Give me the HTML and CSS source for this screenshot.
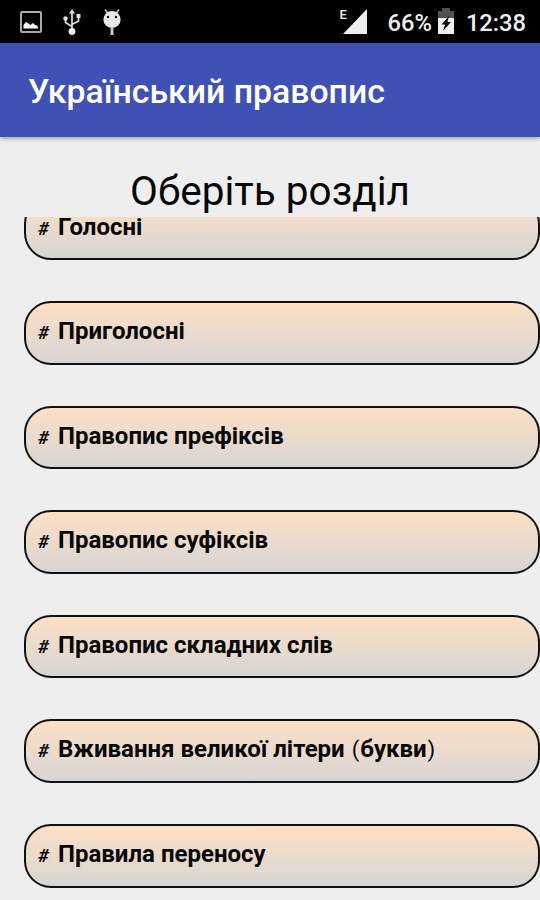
FILE: index.html
```html
<!DOCTYPE html>
<html lang="uk">
<head>
    <meta charset="UTF-8">
    <meta name="viewport" content="width=device-width, initial-scale=1.0">
    <title>Український правопис</title>
    <link rel="stylesheet" href="styles.css">
</head>
<body>

<div class="status-bar">
    <div class="status-left">
        <svg class="icon-image" width="22" height="22" viewBox="0 0 22 22">
            <rect x="1" y="1" width="20" height="20" rx="1" fill="none" stroke="#a8a8a8" stroke-width="2"/>
            <path d="M3.500 17.500V14l2.500-3 2.500 1.500 2 1.500 2.500-2 2 2 2 .5 1.500 3z" fill="#fff"/>
        </svg>
        <svg class="icon-usb" width="18" height="27" viewBox="0 0 18 27">
            <path d="M9 22V3M9 17.500L2.500 13.500V9M9 15.500l6.500-3.500V7" fill="none" stroke="#dedede" stroke-width="1.700"/>
            <path d="M9 0l3 4.500H6z" fill="#dedede"/>
            <circle cx="9" cy="22.500" r="3.400" fill="#f0f0f0"/>
            <circle cx="2.500" cy="9.500" r="2.200" fill="#dedede"/>
            <rect x="13.500" y="5" width="4" height="4" fill="#dedede"/>
        </svg>
        <svg class="icon-debug" width="18" height="27" viewBox="0 0 18 27">
            <path d="M2 .5l3 4M16 .5l-3 4" stroke="#d0d0d0" stroke-width="1.500"/>
            <ellipse cx="9" cy="10.500" rx="8.600" ry="8.500" fill="#e8e8e8"/>
            <path d="M9 18v8" stroke="#c8c8c8" stroke-width="3"/>
            <circle cx="5" cy="8" r="1.200" fill="#111"/>
            <circle cx="13" cy="8" r="1.200" fill="#111"/>
        </svg>
    </div>
    <div class="status-right">
        <span class="network">E</span>
        <svg class="icon-signal" width="24" height="25" viewBox="0 0 24 25">
            <path d="M24 0v25H0z" fill="#eee"/>
        </svg>
        <span class="percent">66%</span>
        <svg class="icon-battery" width="16" height="26" viewBox="0 0 16 26">
            <path d="M0 10V3h4V0h8v3h4v7z" fill="#505050"/>
            <path d="M0 10h16v16H0z" fill="#eee"/>
            <path d="M11 8L3.500 16.500H7L5 23l8-9H9.500z" fill="#111"/>
        </svg>
        <span class="clock">12:38</span>
    </div>
</div>

<header class="app-bar">
    <h1>Український правопис</h1>
</header>

<h2>Оберіть розділ</h2>

<div class="list">
    <div class="item"><span class="hash">#</span>Голосні</div>
    <div class="item"><span class="hash">#</span>Приголосні</div>
    <div class="item"><span class="hash">#</span>Правопис префіксів</div>
    <div class="item"><span class="hash">#</span>Правопис суфіксів</div>
    <div class="item"><span class="hash">#</span>Правопис складних слів</div>
    <div class="item"><span class="hash">#</span>Вживання великої літери <span class="paren">(</span>букви<span class="paren">)</span></div>
    <div class="item"><span class="hash">#</span>Правила переносу</div>
</div>

</body>
</html>
```
FILE: styles.css
```css
body {
    margin: 0;
    height: 900px;
    overflow: hidden;
    display: flex;
    flex-direction: column;
    background-color: #eeeeee;
    color: #080808;
    font-family: Roboto, "Noto Sans", sans-serif;
}
.status-bar {
    height: 43px;
    flex: none;
    display: flex;
    justify-content: space-between;
    background-color: #000;
    color: #eee;
}
.status-left, .status-right {
    display: flex;
    align-items: flex-start;
}
.status-left {
    padding-left: 20px;
}
.icon-image {
    margin-top: 11px;
}
.icon-usb {
    margin: 9px 0 0 21px;
}
.icon-debug {
    margin: 9px 0 0 22px;
}
.status-right {
    padding-right: 14px;
}
.network {
    margin-top: 8px;
    font-size: 13px;
    line-height: 14px;
    font-weight: 500;
    width: 3px;
}
.icon-signal {
    margin-top: 9px;
}
.percent, .clock {
    font-size: 23.7px;
    line-height: 28px;
    margin-top: 9px;
    font-weight: 500;
}
.percent {
    margin-left: 21px;
}
.icon-battery {
    margin: 8px 12px 0 6px;
}
.app-bar {
    height: 94px;
    flex: none;
    display: flex;
    align-items: center;
    padding-left: 28px;
    background-color: #3f51b5;
    box-shadow: 0 1px 5px rgba(0,0,0,0.4);
}
h1 {
    margin: 0 0 -2px;
    color: #fff;
    font-size: 33.8px;
    font-weight: 500;
}
h2 {
    height: 80px;
    flex: none;
    margin: 0;
    text-align: center;
    font-size: 40.5px;
    line-height: 108px;
    font-weight: 400;
}
.list {
    flex: 1;
    min-height: 0;
    overflow: hidden;
    display: flex;
    flex-direction: column;
    gap: 41.1px;
    padding-left: 24px;
}
.item {
    height: 63.5px;
    flex: none;
    box-sizing: border-box;
    padding-left: 12px;
    border: 2px solid #111;
    border-radius: 27px;
    background: linear-gradient(#ffe0c4, #d5d5d5) border-box;
    font-size: 24px;
    line-height: 57px;
    font-weight: 700;
    white-space: nowrap;
}
.item:first-child {
    margin-top: -20.5px;
}
.hash {
    display: inline-block;
    width: 20px;
    font-size: 19px;
    font-style: italic;
}
.paren {
    font-weight: 400;
    font-size: 22px;
    padding: 0 1px;
}
```
